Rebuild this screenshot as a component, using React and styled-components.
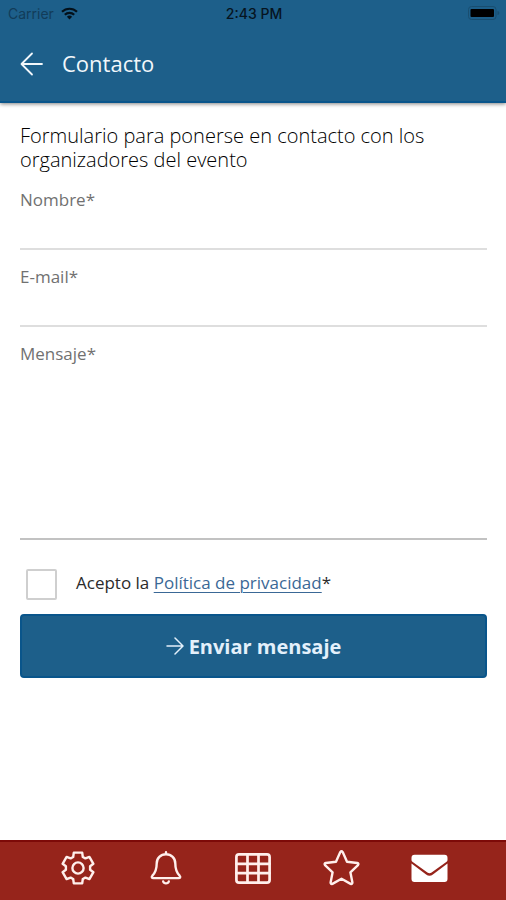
import React, { useState } from 'react';
import styled, { createGlobalStyle } from 'styled-components';

const GlobalStyles = createGlobalStyle`
  :root {
    --blue: #1d5f8a;
    --blueDark: #09558b;
    --red: #96241b;
    --redDark: #7d0a08;
    --grey: #717171;
    --line: #dedede;
  }
  *, *::before, *::after {
    box-sizing: border-box;
  }
  body {
    margin: 0;
    background: white;
    color: #2b2b2b;
    font-family: 'Open Sans', 'Noto Sans', sans-serif;
  }
`;

const PageStyles = styled.div`
  min-height: 100vh;
  display: flex;
  flex-direction: column;
`;

const HeaderStyles = styled.header`
  background: var(--blue);
  border-bottom: 2px solid var(--blueDark);
  box-shadow: 0 1px 4px rgba(0, 0, 0, 0.5);
`;

const StatusBar = styled.div`
  display: grid;
  grid-template-columns: 1fr auto 1fr;
  align-items: center;
  height: 26px;
  padding: 0 6px 0 8px;
  font-family: Inter, 'Liberation Sans', sans-serif;
  font-size: 14px;
  color: #06141f;
  svg {
    display: block;
  }
`;

const Carrier = styled.span`
  display: flex;
  align-items: center;
  gap: 7px;
  color: #123c59;
`;

const Time = styled.span`
  font-weight: 500;
`;

const Battery = styled.span`
  justify-self: end;
`;

const TitleBar = styled.div`
  display: flex;
  align-items: center;
  gap: 19px;
  height: 75px;
  padding: 0 20px;
  color: #f2f7fb;
  h1 {
    margin: 0;
    padding-bottom: 2px;
    font-size: 22px;
    line-height: 30px;
    font-weight: 400;
  }
`;

const BackButton = styled.button`
  display: flex;
  padding: 0;
  border: 0;
  background: none;
  color: inherit;
  cursor: pointer;
`;

const FormStyles = styled.form`
  flex: 1;
  display: flex;
  flex-direction: column;
  padding: 21px 19px 20px 20px;
`;

const Intro = styled.p`
  margin: 0 0 16px;
  font-size: 20px;
  line-height: 24px;
  font-weight: 300;
  color: black;
`;

const Field = styled.div`
  display: flex;
  flex-direction: column;
  margin-bottom: 15px;
  label {
    font-size: 17px;
    line-height: 24px;
    color: var(--grey);
  }
  input,
  textarea {
    width: 100%;
    padding: 4px 0;
    border: 0;
    border-bottom: 2px solid var(--line);
    border-radius: 0;
    outline: 0;
    background: none;
    font: inherit;
    font-size: 17px;
    color: inherit;
    resize: none;
  }
  input {
    height: 38px;
  }
  textarea {
    display: block;
    height: 174px;
    border-color: #c2c2c2;
  }
  input:focus,
  textarea:focus {
    border-color: var(--blue);
  }
`;

const Consent = styled.div`
  display: flex;
  align-items: center;
  gap: 19px;
  margin: 14px 0;
  padding-left: 6px;
  font-size: 17px;
  line-height: 24px;
  input {
    appearance: none;
    width: 31px;
    height: 31px;
    margin: 0;
    border: 2px solid #cfcfcf;
    border-radius: 2px;
    background: white;
  }
  input:checked {
    background: var(--blue);
  }
  label {
    padding-bottom: 4px;
  }
  a {
    color: #3a6896;
    text-decoration-thickness: 1px;
    text-underline-offset: 3px;
  }
`;

const SubmitButton = styled.button`
  display: flex;
  align-items: center;
  justify-content: center;
  gap: 5px;
  height: 64px;
  border: 2px solid var(--blueDark);
  border-radius: 4px;
  background: var(--blue);
  color: #e3f0fb;
  font: inherit;
  font-size: 20px;
  font-weight: 700;
  cursor: pointer;
`;

const NavStyles = styled.nav`
  display: flex;
  height: 60px;
  padding: 0 33px 0 34px;
  background: var(--red);
  border-top: 2px solid var(--redDark);
`;

const NavLink = styled.a`
  flex: 1;
  display: flex;
  align-items: center;
  justify-content: center;
  padding-bottom: 6px;
  color: #ffefec;
  &[aria-current] {
    color: white;
  }
`;

const lineProps = {
  fill: 'none',
  stroke: 'currentColor',
  strokeLinecap: 'round',
  strokeLinejoin: 'round',
  'aria-hidden': true,
};

function WifiIcon() {
  return (
    <svg width="17" height="13" viewBox="0 0 17 13" fill="none" stroke="#03101a" strokeWidth="2.2" aria-hidden="true">
      <path d="M1 4.8a10.8 10.8 0 0 1 15 0" />
      <path d="M3.8 7.7a6.8 6.8 0 0 1 9.4 0" />
      <path d="M8.5 12.4 5.9 9.8a3.7 3.7 0 0 1 5.2 0z" fill="#03101a" stroke="none" />
    </svg>
  );
}

function BatteryIcon() {
  return (
    <svg width="32" height="14" viewBox="0 0 32 14" aria-hidden="true">
      <rect x="0.5" y="0.5" width="27.5" height="13" rx="3" fill="none" stroke="#194e70" />
      <rect x="2.5" y="3" width="23.5" height="8" rx="1" fill="#000000" />
      <path d="M29.5 5v4c1.3-.4 1.8-1.1 1.8-2s-.5-1.6-1.8-2z" fill="#194e70" />
    </svg>
  );
}

function BackIcon() {
  return (
    <svg width="23" height="24" viewBox="0 0 23 24" strokeWidth="1.8" {...lineProps}>
      <path d="M22 12H2M12 1.5 1.5 12 12 22.5" />
    </svg>
  );
}

function SendIcon() {
  return (
    <svg width="18" height="18" viewBox="0 0 18 18" strokeWidth="1.5" {...lineProps}>
      <path d="M1 9h15.5M9 1l8 8-8 8" />
    </svg>
  );
}

function GearIcon() {
  return (
    <svg width="34" height="34" viewBox="-17 -17 34 34" strokeWidth="2.4" {...lineProps}>
      <path d="M-4.8-11-4.2-15.4H4.2L4.8-11 7.4-9.6 11.4-11.1 15.4-4.2 12.1-1.7V1.7L15.4 4.2 11.4 11.1 7.4 9.6 4.8 11 4.2 15.4H-4.2L-4.8 11-7.4 9.6-11.4 11.1-15.4 4.2-12.1 1.7V-1.7L-15.4-4.2-11.4-11.1-7.4-9.6z" />
      <circle r="5.6" />
    </svg>
  );
}

function BellIcon() {
  return (
    <svg width="32" height="34" viewBox="0 0 32 34" strokeWidth="2.4" {...lineProps}>
      <path d="M16 1.300v2M16 3.300c-5.400 0-9.300 3.900-9.300 9.300 0 6.900-1.600 9.400-4.300 12.100-1.200 1.300-.5 2.400 1 2.400h25.200c1.500 0 2.200-1.100 1-2.400-2.700-2.700-4.300-5.200-4.300-12.100 0-5.400-3.900-9.300-9.300-9.300z" />
      <path d="M13.200 30.500a2.900 2.500 0 0 0 5.600 0" />
    </svg>
  );
}

function GridIcon() {
  return (
    <svg width="36" height="31" viewBox="0 0 36 31" strokeWidth="2.7" {...lineProps}>
      <rect x="1.4" y="1.4" width="33.2" height="28.2" rx="2.6" />
      <path d="M12.5 1.4v28.2M23.5 1.4v28.2M1.4 10.8h33.2M1.4 20.2h33.2" />
    </svg>
  );
}

function StarIcon() {
  return (
    <svg width="37" height="36" viewBox="0 0 37 36" strokeWidth="2.4" {...lineProps}>
      <path d="M17.3 2.1q1.2-1.6 2.4 0l4.3 9.6 10.2 1.3q1.9.5.8 2.1l-7.6 7.2 2 10.3q0 1.9-1.8 1.3L18.5 28.8l-9.1 5.1q-1.8.6-1.8-1.3l2-10.3L2 15.1q-1.1-1.6.8-2.1L13 11.7z" />
    </svg>
  );
}

function MailIcon() {
  return (
    <svg width="37" height="29" viewBox="0 0 37 29" fill="currentColor" aria-hidden="true">
      <path d="M3.5.8h30a3 3 0 0 1 3 3V6c0 .7-.3 1.3-.9 1.7L20.6 18.6a3.6 3.6 0 0 1-4.2 0L1.4 7.7A2.1 2.1 0 0 1 .5 6V3.800a3 3 0 0 1 3-3z" />
      <path d="M.5 9.6l14.6 10.9a5.600 5.600 0 0 0 6.800 0L36.500 9.600V25a3 3 0 0 1-3 3h-30a3 3 0 0 1-3-3z" />
    </svg>
  );
}

const navItems = [
  { name: 'Ajustes', href: '#ajustes', Icon: GearIcon },
  { name: 'Avisos', href: '#avisos', Icon: BellIcon },
  { name: 'Programa', href: '#programa', Icon: GridIcon },
  { name: 'Favoritos', href: '#favoritos', Icon: StarIcon },
  { name: 'Contacto', href: '#contacto', Icon: MailIcon, current: true },
];

function Header() {
  return (
    <HeaderStyles>
      <StatusBar>
        <Carrier>
          Carrier
          <WifiIcon />
        </Carrier>
        <Time>2:43 PM</Time>
        <Battery>
          <BatteryIcon />
        </Battery>
      </StatusBar>
      <TitleBar>
        <BackButton type="button" aria-label="Volver">
          <BackIcon />
        </BackButton>
        <h1>Contacto</h1>
      </TitleBar>
    </HeaderStyles>
  );
}

function ContactForm() {
  const [values, setValues] = useState({ name: '', email: '', message: '' });

  function handleChange(e) {
    setValues({ ...values, [e.target.name]: e.target.value });
  }

  return (
    <FormStyles onSubmit={(e) => e.preventDefault()}>
      <Intro>
        Formulario para ponerse en contacto con los organizadores del evento
      </Intro>
      <Field>
        <label htmlFor="name">Nombre*</label>
        <input type="text" id="name" name="name" value={values.name} onChange={handleChange} />
      </Field>
      <Field>
        <label htmlFor="email">E-mail*</label>
        <input type="email" id="email" name="email" value={values.email} onChange={handleChange} />
      </Field>
      <Field>
        <label htmlFor="message">Mensaje*</label>
        <textarea id="message" name="message" value={values.message} onChange={handleChange} />
      </Field>
      <Consent>
        <input type="checkbox" id="privacy" name="privacy" />
        <label htmlFor="privacy">
          Acepto la <a href="#privacidad">Política de privacidad</a>*
        </label>
      </Consent>
      <SubmitButton type="submit">
        <SendIcon />
        Enviar mensaje
      </SubmitButton>
    </FormStyles>
  );
}

export default function App() {
  return (
    <PageStyles>
      <GlobalStyles />
      <Header />
      <ContactForm />
      <NavStyles>
        {navItems.map(({ name, href, Icon, current }) => (
          <NavLink key={name} href={href} aria-label={name} aria-current={current ? 'page' : undefined}>
            <Icon />
          </NavLink>
        ))}
      </NavStyles>
    </PageStyles>
  );
}
